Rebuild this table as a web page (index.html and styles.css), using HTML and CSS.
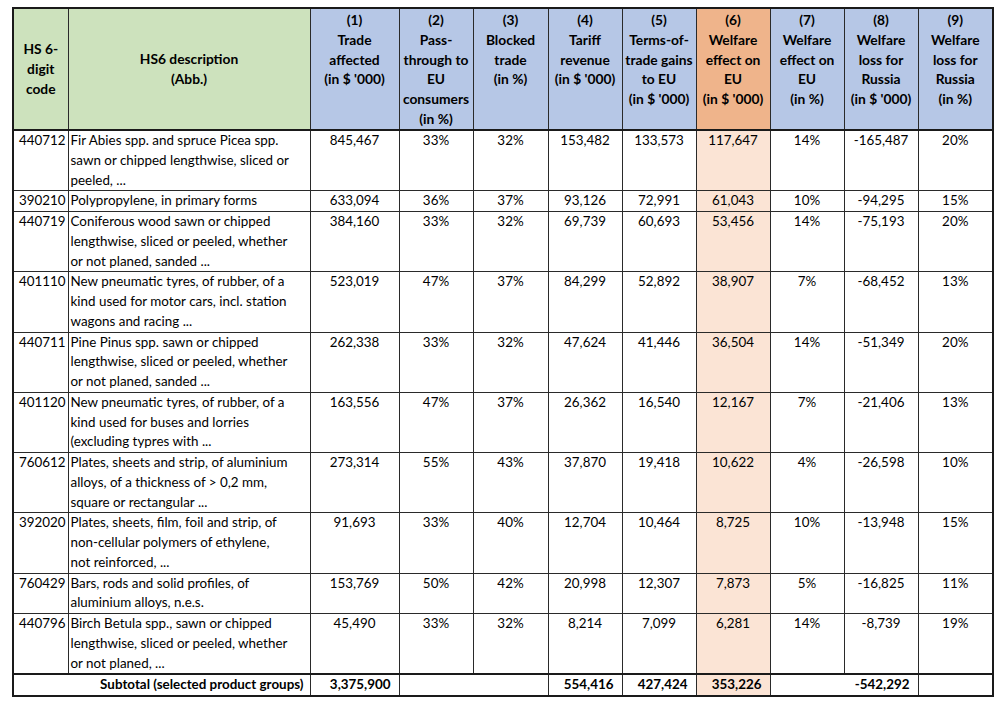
FILE: index.html
```html
<!DOCTYPE html>
<html>
<head>
<meta charset="utf-8">
<link rel="stylesheet" href="styles.css">
</head>
<body>
<table class="tbl">
  <colgroup>
    <col class="c-code"><col class="c-desc"><col class="c-n1"><col class="c-n"><col class="c-n75"><col class="c-n"><col class="c-n"><col class="c-n"><col class="c-n"><col class="c-n"><col class="c-n75">
  </colgroup>
  <thead>
    <tr>
      <th class="h-green">HS 6-<br>digit<br>code</th>
      <th class="h-green">HS6 description<br>(Abb.)</th>
      <th class="h-blue">(1)<br>Trade<br>affected<br>(in $ '000)</th>
      <th class="h-blue">(2)<br>Pass-<br>through to<br>EU<br>consumers<br>(in %)</th>
      <th class="h-blue">(3)<br>Blocked<br>trade<br>(in %)</th>
      <th class="h-blue">(4)<br>Tariff<br>revenue<br>(in $ '000)</th>
      <th class="h-blue">(5)<br>Terms-of-<br>trade gains<br>to EU<br>(in $ '000)</th>
      <th class="h-orange">(6)<br>Welfare<br>effect on<br>EU<br>(in $ '000)</th>
      <th class="h-blue">(7)<br>Welfare<br>effect on<br>EU<br>(in %)</th>
      <th class="h-blue">(8)<br>Welfare<br>loss for<br>Russia<br>(in $ '000)</th>
      <th class="h-blue">(9)<br>Welfare<br>loss for<br>Russia<br>(in %)</th>
    </tr>
  </thead>
  <tbody>
    <tr><td class="code">440712</td><td class="desc">Fir Abies spp. and spruce Picea spp.<br>sawn or chipped lengthwise, sliced or<br>peeled, ...</td><td>845,467</td><td>33%</td><td>32%</td><td>153,482</td><td>133,573</td><td class="hl">117,647</td><td>14%</td><td>-165,487</td><td>20%</td></tr>
    <tr><td class="code">390210</td><td class="desc">Polypropylene, in primary forms</td><td>633,094</td><td>36%</td><td>37%</td><td>93,126</td><td>72,991</td><td class="hl">61,043</td><td>10%</td><td>-94,295</td><td>15%</td></tr>
    <tr><td class="code">440719</td><td class="desc">Coniferous wood sawn or chipped<br>lengthwise, sliced or peeled, whether<br>or not planed, sanded ...</td><td>384,160</td><td>33%</td><td>32%</td><td>69,739</td><td>60,693</td><td class="hl">53,456</td><td>14%</td><td>-75,193</td><td>20%</td></tr>
    <tr><td class="code">401110</td><td class="desc">New pneumatic tyres, of rubber, of a<br>kind used for motor cars, incl. station<br>wagons and racing ...</td><td>523,019</td><td>47%</td><td>37%</td><td>84,299</td><td>52,892</td><td class="hl">38,907</td><td>7%</td><td>-68,452</td><td>13%</td></tr>
    <tr><td class="code">440711</td><td class="desc">Pine Pinus spp. sawn or chipped<br>lengthwise, sliced or peeled, whether<br>or not planed, sanded ...</td><td>262,338</td><td>33%</td><td>32%</td><td>47,624</td><td>41,446</td><td class="hl">36,504</td><td>14%</td><td>-51,349</td><td>20%</td></tr>
    <tr><td class="code">401120</td><td class="desc">New pneumatic tyres, of rubber, of a<br>kind used for buses and lorries<br>(excluding typres with ...</td><td>163,556</td><td>47%</td><td>37%</td><td>26,362</td><td>16,540</td><td class="hl">12,167</td><td>7%</td><td>-21,406</td><td>13%</td></tr>
    <tr><td class="code">760612</td><td class="desc">Plates, sheets and strip, of aluminium<br>alloys, of a thickness of &gt; 0,2 mm,<br>square or rectangular ...</td><td>273,314</td><td>55%</td><td>43%</td><td>37,870</td><td>19,418</td><td class="hl">10,622</td><td>4%</td><td>-26,598</td><td>10%</td></tr>
    <tr><td class="code">392020</td><td class="desc">Plates, sheets, film, foil and strip, of<br>non-cellular polymers of ethylene,<br>not reinforced, ...</td><td>91,693</td><td>33%</td><td>40%</td><td>12,704</td><td>10,464</td><td class="hl">8,725</td><td>10%</td><td>-13,948</td><td>15%</td></tr>
    <tr><td class="code">760429</td><td class="desc">Bars, rods and solid profiles, of<br>aluminium alloys, n.e.s.</td><td>153,769</td><td>50%</td><td>42%</td><td>20,998</td><td>12,307</td><td class="hl">7,873</td><td>5%</td><td>-16,825</td><td>11%</td></tr>
    <tr><td class="code">440796</td><td class="desc">Birch Betula spp., sawn or chipped<br>lengthwise, sliced or peeled, whether<br>or not planed, ...</td><td>45,490</td><td>33%</td><td>32%</td><td>8,214</td><td>7,099</td><td class="hl">6,281</td><td>14%</td><td>-8,739</td><td>19%</td></tr>
  </tbody>
  <tfoot>
    <tr>
      <td class="sub-label" colspan="2">Subtotal (selected product groups)</td>
      <td class="sub">3,375,900</td>
      <td class="sub" colspan="2"></td>
      <td class="sub">554,416</td>
      <td class="sub">427,424</td>
      <td class="sub hl">353,226</td>
      <td class="sub" colspan="2">-542,292</td>
      <td class="sub"></td>
    </tr>
  </tfoot>
</table>
</body>
</html>
```

FILE: styles.css
```css
html, body {
  background: #ffffff;
}
body {
  margin: 0;
  padding: 7px 0 0 12px;
  font-family: Lato, "Liberation Sans", sans-serif;
  color: #000000;
}
.tbl {
  border-collapse: collapse;
  table-layout: fixed;
  width: 980px;
  border: 2px solid #1a1a1a;
  font-size: 13.4px;
  line-height: 19.75px;
}
.c-code { width: 55px; }
.c-desc { width: 242px; }
.c-n1 { width: 89px; }
.c-n { width: 74px; }
.c-n75 { width: 75px; }

.tbl th, .tbl td {
  border: 1px solid #2a2a2a;
  padding: 0;
  white-space: nowrap;
  overflow: hidden;
}
.tbl th {
  height: 119px;
  font-size: 13.8px;
  font-weight: 700;
  text-align: center;
  vertical-align: top;
  padding-top: 1px;
}
.tbl thead tr {
  border-bottom: 2px solid #1a1a1a;
}
.h-green {
  background: #cde2bd;
  vertical-align: middle !important;
  padding-top: 0 !important;
}
.h-blue { background: #b6c7e6; }
.h-orange { background: #efb48b; }

.tbl td {
  text-align: center;
  vertical-align: top;
}
.tbl td.code {
  text-align: right;
  padding-right: 2px;
}
.tbl td.desc {
  text-align: left;
  padding-left: 2px;
}
.tbl td.hl { background: #fbe4d5; }

.tbl tfoot tr {
  border-top: 2px solid #1a1a1a;
}
.tbl td.sub-label {
  text-align: right;
  padding-right: 6px;
  font-weight: 700;
  height: 19px;
}
.tbl td.sub {
  text-align: right;
  padding-right: 8px;
  font-weight: 700;
}
```
